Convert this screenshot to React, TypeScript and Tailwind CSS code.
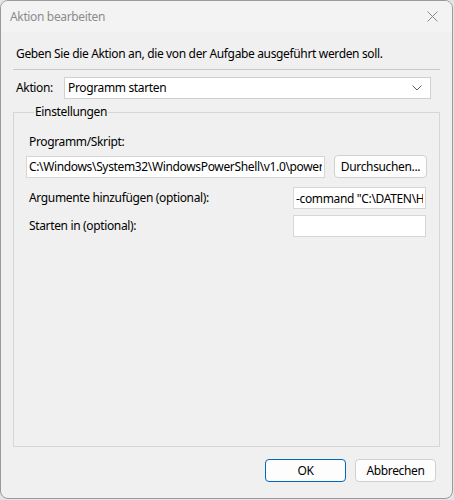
import React from 'react'

const font = { fontFamily: '"Noto Sans", "Liberation Sans", sans-serif', letterSpacing: '-0.35px' }

function Field({ value, className }: { value: string; className: string }) {
  return (
    <input
      readOnly
      value={value}
      className={`h-[22px] border border-[#d6d6d6] bg-white px-[2px] text-[12px] text-black outline-none ${className}`}
      style={font}
    />
  )
}

function Button({ label, primary, className }: { label: string; primary?: boolean; className: string }) {
  return (
    <button
      className={`h-[23px] rounded-[4px] border bg-[#fdfdfd] text-[12px] text-black ${
        primary ? 'border-[#0067c0]' : 'border-[#d0d0d0]'
      } ${className}`}
      style={font}
    >
      {label}
    </button>
  )
}

export default function App() {
  return (
    <div className="h-[500px] w-[454px] bg-[#e4e4e4]" style={font}>
      <div className="flex h-[499px] w-[453px] flex-col overflow-hidden rounded-[8px] border border-[#9a9a9a] bg-[#f0f0f0]">
        {/* title bar */}
        <div className="flex h-[31px] shrink-0 items-center justify-between bg-[#f3f3f3] pl-[9px] pr-[14px]">
          <span className="text-[12px] text-[#8c8c8c]">Aktion bearbeiten</span>
          <svg width="11" height="11" viewBox="0 0 11 11">
            <path d="M0.5 0.5 L10.5 10.5 M10.5 0.5 L0.5 10.5" stroke="#8a8a8a" strokeWidth="1" />
          </svg>
        </div>

        <div className="flex flex-1 flex-col px-[12px]">
          <p className="mt-[13px] pl-[3px] text-[12px] text-black">
            Geben Sie die Aktion an, die von der Aufgabe ausgeführt werden soll.
          </p>
          <div className="mt-[6px] h-px bg-[#c8c8c8]" />

          <div className="mt-[7px] flex items-center">
            <span className="w-[51px] shrink-0 pl-[3px] text-[12px] text-black">Aktion:</span>
            <div className="flex h-[22px] w-[367px] shrink-0 items-center justify-between border border-[#d0d0d0] bg-white pl-[3px] pr-[8px]">
              <span className="text-[12px] text-black">Programm starten</span>
              <svg width="10" height="6" viewBox="0 0 10 6">
                <path d="M0.5 0.5 L5 5 L9.5 0.5" stroke="#606060" fill="none" strokeWidth="1" />
              </svg>
            </div>
          </div>

          {/* group box */}
          <fieldset className="mt-[6px] h-[342px] border border-[#d6d6d6] pb-0 pl-[12px] pr-[12px] pt-0">
            <legend className="ml-[8px] px-[1px] text-[12px] leading-[14px] text-black">Einstellungen</legend>
            <p className="mt-[14px] pl-[3px] text-[12px] text-black">Programm/Skript:</p>
            <div className="mt-[4px] flex items-center">
              <Field value="C:\Windows\System32\WindowsPowerShell\v1.0\powershell.exe" className="w-[299px]" />
              <Button label="Durchsuchen..." className="ml-[9px] w-[93px]" />
            </div>
            <div className="mt-[9px] flex items-center justify-between">
              <span className="pl-[3px] text-[12px] text-black">Argumente hinzufügen (optional):</span>
              <Field value='-command "C:\DATEN\Homelab\script.ps1"' className="mr-[1px] w-[133px]" />
            </div>
            <div className="mt-[6px] flex items-center justify-between">
              <span className="pl-[3px] text-[12px] text-black">Starten in (optional):</span>
              <Field value="" className="mr-[1px] w-[133px]" />
            </div>
          </fieldset>

          <div className="mt-[12px] flex justify-end gap-[9px] pr-[4px]">
            <Button label="OK" primary className="w-[81px]" />
            <Button label="Abbrechen" className="w-[81px]" />
          </div>
        </div>
      </div>
    </div>
  )
}
